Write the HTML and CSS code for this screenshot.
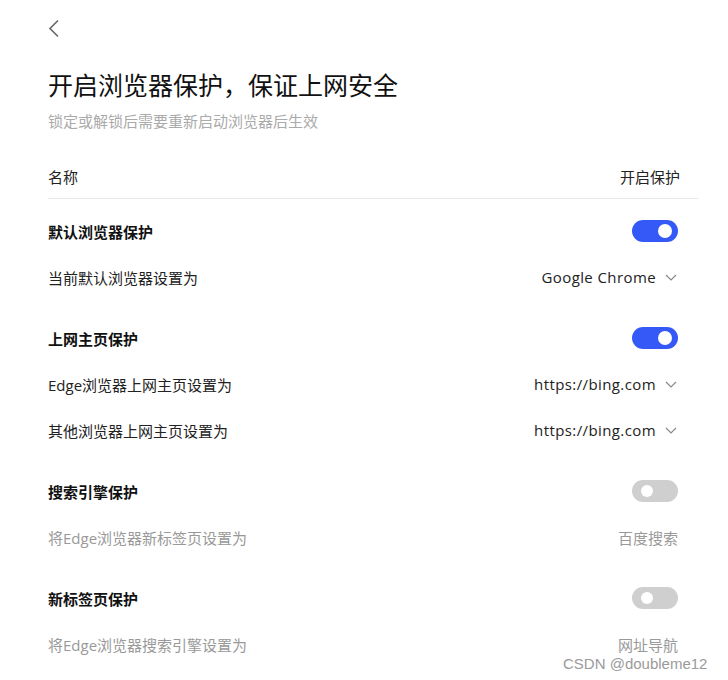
FILE: index.html
```html
<!DOCTYPE html>
<html lang="zh-CN">
<head>
<meta charset="utf-8">
<link rel="stylesheet" href="styles.css">
</head>
<body>
<div class="page">
  <div class="back">
    <svg width="12" height="19" viewBox="0 0 12 19"><path d="M10 1.5 L2 9.5 L10 17.5" fill="none" stroke="#666" stroke-width="1.6"/></svg>
  </div>
  <h1 class="title">开启浏览器保护，保证上网安全</h1>
  <p class="subtitle">锁定或解锁后需要重新启动浏览器后生效</p>
  <div class="head-row"><span>名称</span><span>开启保护</span></div>
  <div class="list">
    <div class="section">
      <div class="row"><span class="sec-title">默认浏览器保护</span><span class="toggle on"></span></div>
      <div class="row"><span>当前默认浏览器设置为</span><span class="select">Google Chrome<svg class="chev" width="12" height="7" viewBox="0 0 12 7"><path d="M1 1 L6 6 L11 1" fill="none" stroke="#888" stroke-width="1.2"/></svg></span></div>
    </div>
    <div class="section">
      <div class="row"><span class="sec-title">上网主页保护</span><span class="toggle on"></span></div>
      <div class="row"><span>Edge浏览器上网主页设置为</span><span class="select">https://bing.com<svg class="chev" width="12" height="7" viewBox="0 0 12 7"><path d="M1 1 L6 6 L11 1" fill="none" stroke="#888" stroke-width="1.2"/></svg></span></div>
      <div class="row"><span>其他浏览器上网主页设置为</span><span class="select">https://bing.com<svg class="chev" width="12" height="7" viewBox="0 0 12 7"><path d="M1 1 L6 6 L11 1" fill="none" stroke="#888" stroke-width="1.2"/></svg></span></div>
    </div>
    <div class="section">
      <div class="row"><span class="sec-title">搜索引擎保护</span><span class="toggle"></span></div>
      <div class="row disabled"><span>将Edge浏览器新标签页设置为</span><span>百度搜索</span></div>
    </div>
    <div class="section">
      <div class="row"><span class="sec-title">新标签页保护</span><span class="toggle"></span></div>
      <div class="row disabled"><span>将Edge浏览器搜索引擎设置为</span><span>网址导航</span></div>
    </div>
  </div>
</div>
<div class="watermark">CSDN @doubleme12</div>
</body>
</html>
```
FILE: styles.css
```css
html, body {
  margin: 0;
  padding: 0;
  background: #fff;
}
body {
  font-family: "Open Sans", "Noto Sans CJK SC", sans-serif;
  color: #222;
  font-size: 15px;
  width: 728px;
  height: 680px;
  overflow: hidden;
  position: relative;
}
.page {
  padding: 0 30px 0 48px;
}
.back {
  height: 67px;
  box-sizing: border-box;
  padding-top: 19px;
}
.back svg { display: block; }
.title {
  margin: 0;
  font-size: 25px;
  font-weight: 400;
  line-height: 36px;
  height: 36px;
  color: #111;
}
.subtitle {
  margin: 7px 0 0;
  font-size: 15px;
  line-height: 22px;
  color: #aaa;
}
.head-row {
  margin-top: 22px;
  height: 44px;
  display: flex;
  justify-content: space-between;
  align-items: center;
  padding-right: 18px;
  border-bottom: 1px solid #e8e8e8;
  color: #222;
}
.list {
  padding-top: 9px;
}
.section + .section {
  margin-top: 15px;
}
.row {
  height: 46px;
  display: flex;
  align-items: center;
  justify-content: space-between;
  padding-right: 20px;
}
.sec-title {
  font-weight: 700;
  color: #111;
}
.disabled { color: #999; }
.select {
  display: flex;
  align-items: center;
  color: #222;
  letter-spacing: 0.4px;
}
.chev { margin-left: 9px; margin-right: 1px; display: block; }
.toggle {
  width: 46px;
  height: 22px;
  border-radius: 11px;
  background: #cfcfcf;
  position: relative;
}
.toggle::after {
  content: "";
  position: absolute;
  top: 5px;
  left: 9px;
  width: 12px;
  height: 12px;
  border-radius: 50%;
  background: #fff;
}
.toggle.on { background: #3559f6; }
.toggle.on::after { left: auto; right: 6px; top: 4px; width: 14px; height: 14px; }
.watermark {
  position: absolute;
  left: 563px;
  top: 655px;
  font-family: "Liberation Sans", Arial, sans-serif;
  font-size: 15px;
  color: #9a9a9a;
  white-space: nowrap;
}
```
